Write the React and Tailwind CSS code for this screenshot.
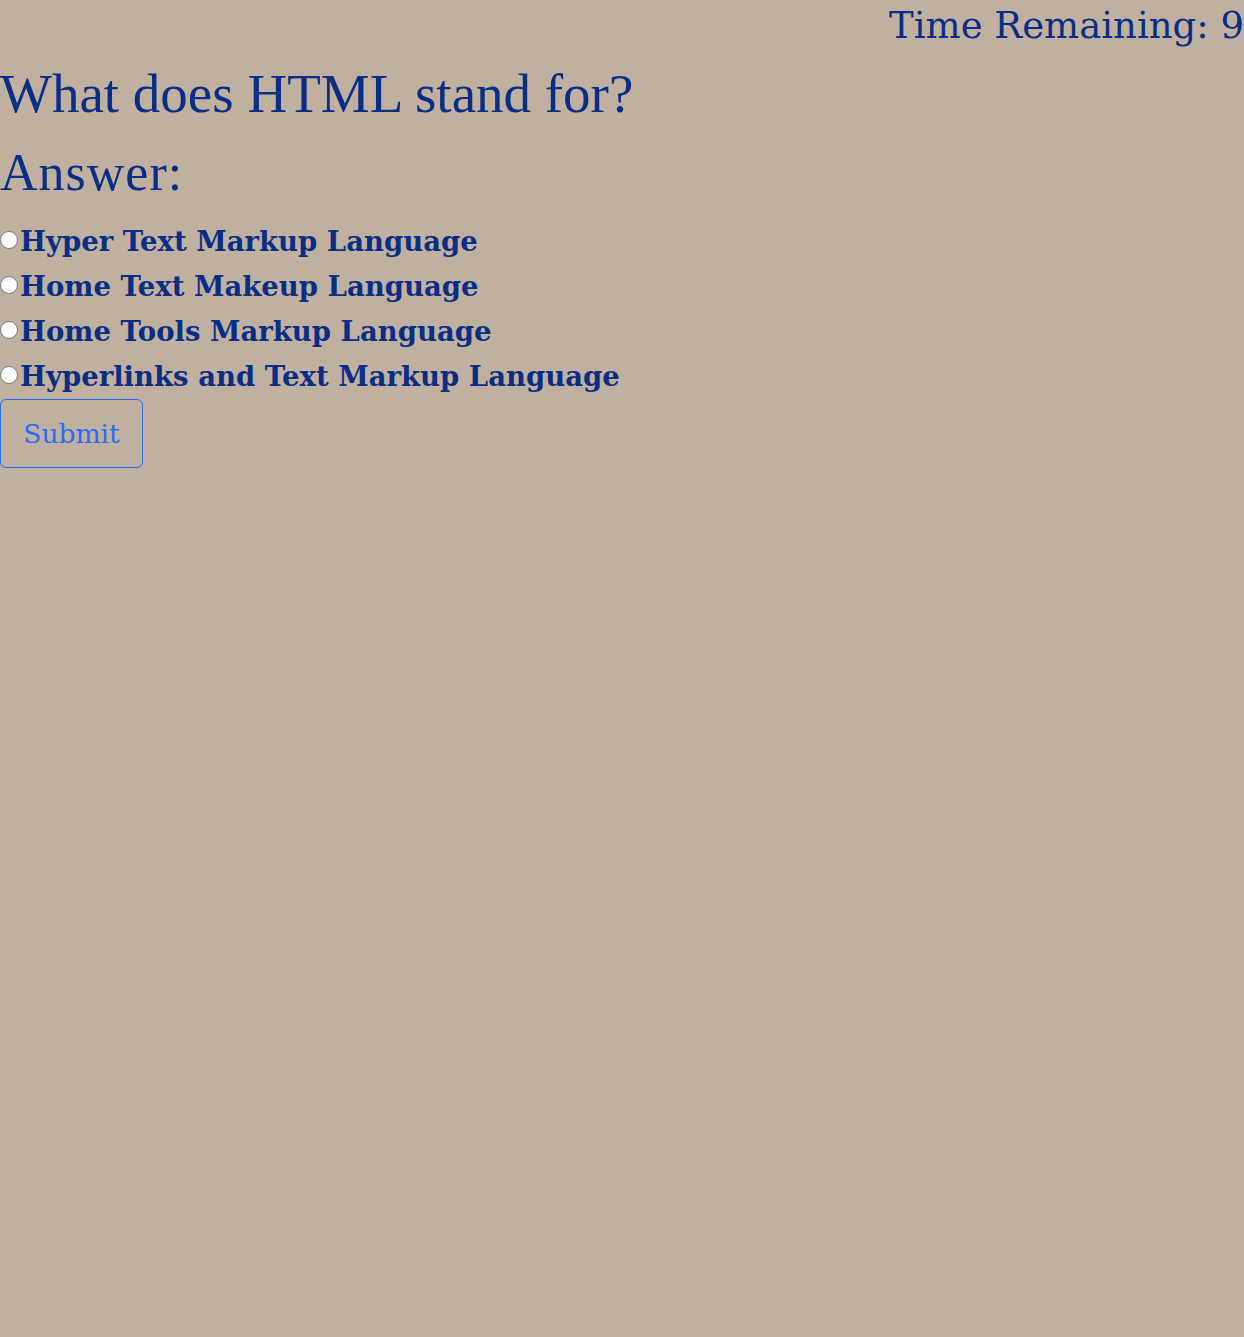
export default function App() {
  const options = [
    "Hyper Text Markup Language",
    "Home Text Makeup Language",
    "Home Tools Markup Language",
    "Hyperlinks and Text Markup Language",
  ];
  const serif = '"Liberation Serif", "DejaVu Serif", serif';
  const wide = '"DejaVu Serif", "Liberation Serif", serif';
  return (
    <div className="min-h-[1337px] w-full bg-[#c0b0a0] text-[#0b2e85] pt-[2px]" style={{ fontFamily: serif }}>
      <div className="text-right text-[37px] leading-[48px] h-[48px]" style={{ fontFamily: wide }}>
        Time Remaining: 9
      </div>
      <h1 className="text-[55px] leading-[68px] font-normal mt-[10px]">What does HTML stand for?</h1>
      <div className="text-[52px] leading-[64px] mt-[13px] tracking-[1px]">Answer:</div>
      <div className="mt-[14px] flex flex-col" style={{ fontFamily: wide }}>
        {options.map((o) => (
          <label key={o} className="flex items-center h-[45px] text-[27.5px] font-bold">
            <span className="w-[18px] h-[18px] rounded-full bg-white border border-[#767676] mt-[-4px] mr-[2px] shrink-0" />
            <span>{o}</span>
          </label>
        ))}
      </div>
      <button
        className="mt-[0px] w-[143px] h-[69px] rounded-[6px] border border-[#2a6bf0] text-[#2a6cf8] text-[26.5px] bg-transparent"
        style={{ fontFamily: wide }}
      >
        Submit
      </button>
    </div>
  );
}
